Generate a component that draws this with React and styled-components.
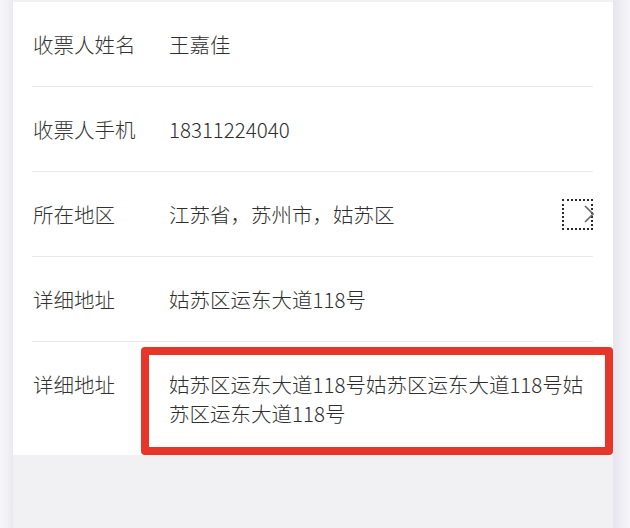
import React from "react";
import styled, { createGlobalStyle } from "styled-components";

const Global = createGlobalStyle`
  html, body { margin: 0; padding: 0; background: #f1f1f3; }
  body { font-family: "Noto Sans CJK SC", "Noto Sans", sans-serif; }
`;

const Frame = styled.div`
  display: grid;
  grid-template-columns: 13px 600px 17px;
  height: 528px;
  overflow: hidden;
`;

const Gutter = styled.div`
  background: ${(p) =>
    p.$side === "left"
      ? "linear-gradient(to right, #f6f6f8 0%, #f1f1f4 60%, #e9e8ef 100%)"
      : "linear-gradient(to right, #e6e4ee 0%, #efeef4 50%, #f6f6f9 100%)"};
`;

const Column = styled.div`
  display: flex;
  flex-direction: column;
  padding-top: 2px;
  background: #f1f1f3;
`;

const Panel = styled.div`
  background: #ffffff;
  padding: 0 20px 0 19px;
`;

const Row = styled.div`
  display: flex;
  align-items: ${(p) => (p.$top ? "flex-start" : "center")};
  min-height: ${(p) => (p.$top ? "auto" : "84px")};
  padding-top: ${(p) => (p.$top ? "5px" : "0")};
  border-bottom: ${(p) => (p.$last ? "none" : "1px solid #e9e9ed")};
  font-size: 20.5px;
  font-weight: 300;
  color: #2e2e2e;
`;

const Label = styled.div`
  flex: 0 0 108px;
  line-height: 29px;
  padding-left: 1px;
  padding-top: ${(p) => (p.$top ? "23px" : "0")};
  color: #333333;
`;

const Value = styled.div`
  flex: 1;
  line-height: 29px;
  padding-left: 28px;
  ${(p) =>
    p.$highlight &&
    `
    border: 8px solid #e8352a;
    border-radius: 4px;
    padding: 15px 16px 19px 20px;
    margin-right: -20px;
  `}
`;

const ArrowBox = styled.div`
  flex: 0 0 auto;
  width: 27px;
  height: 27px;
  border: 2px dotted #2a2a2a;
  display: flex;
  align-items: center;
  justify-content: flex-end;
  overflow: visible;
`;

const Chevron = styled.svg`
  width: 10px;
  height: 18px;
  margin-right: -3px;
`;

const Filler = styled.div`
  flex: 1;
`;

export default function App() {
  return (
    <>
      <Global />
      <Frame>
        <Gutter $side="left" />
        <Column>
          <Panel>
            <Row>
              <Label>收票人姓名</Label>
              <Value>王嘉佳</Value>
            </Row>
            <Row>
              <Label>收票人手机</Label>
              <Value>18311224040</Value>
            </Row>
            <Row>
              <Label>所在地区</Label>
              <Value>江苏省，苏州市，姑苏区</Value>
              <ArrowBox>
                <Chevron viewBox="0 0 10 18">
                  <path d="M1 1 L9 9 L1 17" fill="none" stroke="#666" strokeWidth="1.6" />
                </Chevron>
              </ArrowBox>
            </Row>
            <Row>
              <Label>详细地址</Label>
              <Value>姑苏区运东大道118号</Value>
            </Row>
            <Row $top $last>
              <Label $top>详细地址</Label>
              <Value $highlight>
                姑苏区运东大道118号姑苏区运东大道118号姑苏区运东大道118号
              </Value>
            </Row>
          </Panel>
          <Filler />
        </Column>
        <Gutter $side="right" />
      </Frame>
    </>
  );
}
